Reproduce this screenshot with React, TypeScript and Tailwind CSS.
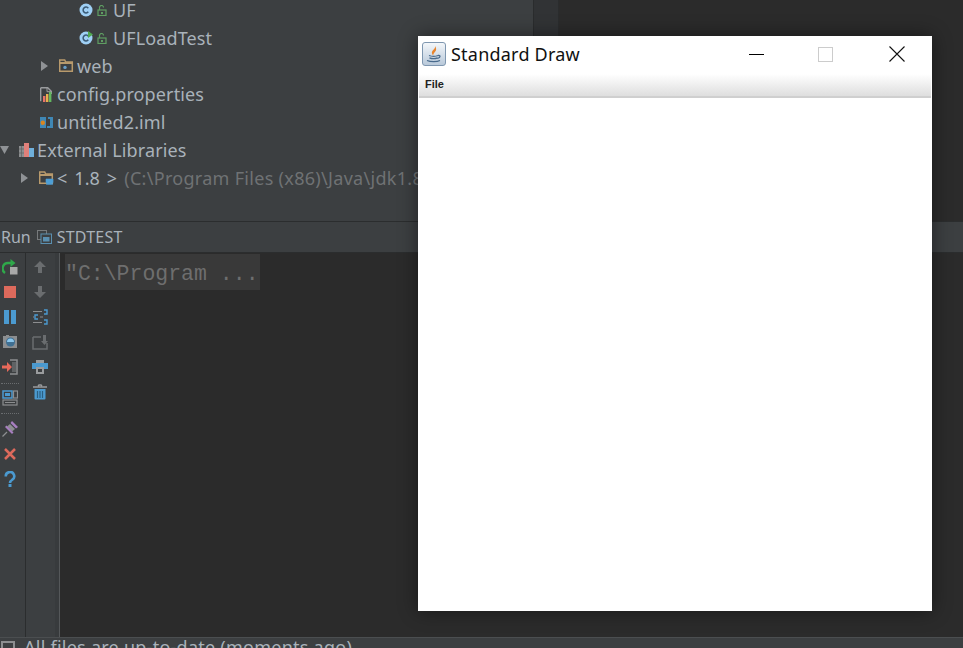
import type { ReactNode } from "react";

const uiFont = "font-['Noto_Sans',sans-serif]";

function ClassIcon({ run }: { run?: boolean }) {
  return (
    <svg width="14" height="14" viewBox="0 0 14 14" aria-hidden="true">
      <circle cx="7" cy="7" r="6.5" fill="#9fd0f5" />
      <path d="M9.3 5.2A2.9 2.9 0 1 0 9.3 8.8" fill="none" stroke="#3a5a75" strokeWidth="1.5" />
      {run && <path d="M9 0l5 3.5-5 3.5z" fill="#4fa84f" />}
    </svg>
  );
}

function LockIcon() {
  return (
    <svg width="10" height="11" viewBox="0 0 10 11" aria-hidden="true">
      <path d="M2.5 5V2.5a2 2 0 0 1 4 0" fill="none" stroke="#5f9e62" strokeWidth="1.2" />
      <rect x="1" y="5" width="8" height="5.5" fill="none" stroke="#5f9e62" strokeWidth="1.2" />
      <rect x="4" y="7" width="2" height="2" fill="#5f9e62" />
    </svg>
  );
}

function Arrow({ down }: { down?: boolean }) {
  return (
    <svg width="9" height="10" viewBox="0 0 9 10" aria-hidden="true">
      <path d={down ? "M0 1h9L4.5 9z" : "M1 0l7 5-7 5z"} fill="#8f9295" />
    </svg>
  );
}

function FolderIcon({ cup }: { cup?: boolean }) {
  return (
    <svg width="16" height="14" viewBox="0 0 16 14" aria-hidden="true">
      <path d="M.7 1h5l1 2h6.6v9.3H.7z" fill="none" stroke="#b89a6c" strokeWidth="1.5" />
      <path d="M1 3h12v2H1z" fill="#b89a6c" />
      {cup ? (
        <path d="M7 8h7v3a2 2 0 0 1-2 2H9a2 2 0 0 1-2-2zM7 13.5h7" fill="#4d9fd6" stroke="#4d9fd6" strokeWidth=".6" />
      ) : (
        <circle cx="6" cy="8.4" r="1.7" fill="#6a9fc8" />
      )}
    </svg>
  );
}

function PropertiesIcon() {
  return (
    <svg width="13" height="15" viewBox="0 0 13 15" aria-hidden="true">
      <path d="M.7.7h7l3.6 3.6V7M.7.7v13.6" fill="none" stroke="#9a9c9e" strokeWidth="1.4" />
      <path d="M7 .7v4h4" fill="none" stroke="#9a9c9e" strokeWidth="1" />
      <rect x="3" y="9" width="2.4" height="6" fill="#e8746a" />
      <rect x="6" y="7" width="2.4" height="8" fill="#e8b04f" />
      <rect x="9" y="5" width="2.4" height="10" fill="#62b85f" />
    </svg>
  );
}

function ImlIcon() {
  return (
    <svg width="13" height="13" viewBox="0 0 13 13" aria-hidden="true">
      <path d="M0 1h6v11H0z" fill="#3f87b5" />
      <path d="M8 1h5v11H7v-2h3V3H8z" fill="#3f87b5" />
      <circle cx="2.800" cy="6.800" r="2.200" fill="#d9861f" />
    </svg>
  );
}

function LibrariesIcon() {
  return (
    <svg width="15" height="14" viewBox="0 0 15 14" aria-hidden="true">
      <rect x="0" y="3" width="5" height="11" fill="#8c8e90" />
      <path d="M0 6h5M0 10h5M2.500 3v11" stroke="#5f6163" strokeWidth=".7" />
      <rect x="5" y="0" width="5" height="14" fill="#e0807a" />
      <rect x="10" y="5" width="5" height="9" fill="#6fb0dc" />
    </svg>
  );
}

function TreeRow({ indent, icon, children }: { indent: string; icon: ReactNode; children: ReactNode }) {
  return (
    <div className={`flex h-[28px] items-center whitespace-nowrap ${indent}`}>
      {icon}
      {children}
    </div>
  );
}

function ToolIcon({ children }: { children: ReactNode }) {
  return (
    <div className="flex h-[25px] w-full items-center justify-center">
      <svg width="16" height="16" viewBox="0 0 16 16" aria-hidden="true">
        {children}
      </svg>
    </div>
  );
}

function Dotted() {
  return <div className="mx-[1px] h-0 border-t border-dotted border-[#6a6d70]" />;
}

function JavaIcon() {
  return (
    <div className="flex h-[24px] w-[24px] items-center justify-center rounded-[3px] border border-[#7f97b0] bg-gradient-to-b from-[#f4f7fa] to-[#b9c9da]">
      <svg width="18" height="19" viewBox="0 0 18 19" aria-hidden="true">
        <path d="M10 1c1 3-4 4.500-3 7.500.3 1 1.200 2 1.200 2C7.800 8.500 10.500 7 11 5.200c.4-1.400-.2-3-1-4.200z" fill="#e8842c" />
        <path d="M4 10.500c2.500 1 7 1 9 0M4.500 12.800c2 .8 6 .8 8 0M13 10.500c2.500-.5 3 2-.5 2.800M2 15.500c3.500 1.500 10 1.500 13 0" fill="none" stroke="#486a8c" strokeWidth="1.300" />
      </svg>
    </div>
  );
}

export default function App() {
  return (
    <div className={`relative flex h-[648px] w-[963px] flex-col overflow-hidden bg-[#2b2b2b] ${uiFont}`}>
      {/* Project tree */}
      <div className="flex h-[221px] shrink-0">
        <div className="w-[533px] overflow-hidden bg-[#3c3f41] text-[18px] tracking-[0.12px] text-[#a9b2ba]">
          <div className="-mt-[4px]">
            <TreeRow indent="pl-[79px]" icon={<><ClassIcon /><span className="ml-[4px]"><LockIcon /></span></>}>
              <span className="ml-[6px]">UF</span>
            </TreeRow>
            <TreeRow indent="pl-[79px]" icon={<><ClassIcon run /><span className="ml-[4px]"><LockIcon /></span></>}>
              <span className="ml-[6px]">UFLoadTest</span>
            </TreeRow>
            <TreeRow indent="pl-[40px]" icon={<><Arrow /><span className="ml-[10px]"><FolderIcon /></span></>}>
              <span className="ml-[2px]">web</span>
            </TreeRow>
            <TreeRow indent="pl-[40px]" icon={<PropertiesIcon />}>
              <span className="ml-[4px]">config.properties</span>
            </TreeRow>
            <TreeRow indent="pl-[40px]" icon={<ImlIcon />}>
              <span className="ml-[4px]">untitled2.iml</span>
            </TreeRow>
            <TreeRow indent="pl-0" icon={<><Arrow down /><span className="ml-[10px]"><LibrariesIcon /></span></>}>
              <span className="ml-[3px]">External Libraries</span>
            </TreeRow>
            <TreeRow indent="pl-[20px]" icon={<><Arrow /><span className="ml-[10px]"><FolderIcon cup /></span></>}>
              <span className="ml-[2px] [word-spacing:2px]">&lt; 1.8 &gt;</span>
              <span className="ml-[7px] tracking-[0.3px] text-[#6f7274]">(C:\Program Files (x86)\Java\jdk1.8</span>
            </TreeRow>
          </div>
        </div>
        <div className="w-[26px] border-x border-[#2a2c2d] bg-[#313335]" />
        <div className="flex-1 bg-[#2b2b2b]" />
      </div>

      {/* Run tool window header */}
      <div className="flex h-[32px] shrink-0 items-center border-y border-[#2b2d2e] bg-[#3c3f41] pl-[1px] text-[16px] text-[#a9b2ba]">
        <span>Run</span>
        <svg className="ml-[6px]" width="15" height="14" viewBox="0 0 15 14" aria-hidden="true">
          <rect x=".5" y=".5" width="9" height="9" fill="none" stroke="#777a7c" />
          <rect x="4" y="4" width="10.500" height="9.500" fill="#3c3f41" stroke="#5a8fb0" />
          <rect x="6" y="7" width="6.500" height="4.500" fill="#5a8fb0" />
        </svg>
        <span className="ml-[5px] tracking-[0.2px]">STDTEST</span>
      </div>

      {/* Run tool window body */}
      <div className="flex min-h-0 flex-1">
        <div className="w-[26px] shrink-0 border-r border-[#2b2d2e] bg-[#3c3f41] pr-[5px] pt-[1px]">
          <ToolIcon>
            <path d="M3 14A5.500 5.500 0 0 1 6 4h4" fill="none" stroke="#2fa84a" strokeWidth="2.400" />
            <path d="M8.500 0l5 4-5 4z" fill="#2fa84a" />
            <rect x="8" y="8" width="7.500" height="7.500" fill="#a8a8a8" />
          </ToolIcon>
          <ToolIcon><rect x="2" y="2" width="12" height="12" fill="#dd6a5c" /></ToolIcon>
          <ToolIcon>
            <rect x="2" y="1" width="5" height="14" fill="#4b9ad0" />
            <rect x="9" y="1" width="5" height="14" fill="#4b9ad0" />
          </ToolIcon>
          <ToolIcon>
            <path d="M1 2h3V1h3v1h8v12H1z" fill="#8c8e90" />
            <circle cx="8.500" cy="8" r="4.500" fill="#3f6f92" />
            <path d="M5 8a3.500 3.500 0 0 1 7 0z" fill="#8ac6ec" />
          </ToolIcon>
          <ToolIcon>
            <path d="M8 1h7v14H8" fill="none" stroke="#8c8e90" strokeWidth="1.500" />
            <path d="M10 3h4v10h-4z" fill="#5f6264" />
            <path d="M0 6.500h5V3l5 5-5 5V9.500H0z" fill="#e8695a" />
          </ToolIcon>
          <div className="mt-[4px]"><Dotted /></div>
          <div className="mt-[1px]">
            <ToolIcon>
              <rect x="1" y="1" width="9" height="7" fill="none" stroke="#4b9ad0" strokeWidth="1.500" />
              <rect x="3" y="3" width="5" height="3" fill="#4b9ad0" />
              <rect x="11.500" y="1" width="4" height="7" fill="none" stroke="#8c8e90" strokeWidth="1.200" />
              <rect x="1" y="10" width="14" height="5" fill="none" stroke="#8c8e90" strokeWidth="1.200" />
              <path d="M3 12.500h10" stroke="#8c8e90" />
            </ToolIcon>
          </div>
          <div className="mt-[3px]"><Dotted /></div>
          <div className="mt-[2px]">
            <ToolIcon>
              <path d="M10 0l6 6-2 1.500L8.500 2z" fill="#a77fc0" />
              <path d="M8 3l5 5-3 2.500-5-5z" fill="#8c8e90" />
              <path d="M4.500 4.500l7 7-1.500 1.500-7-7z" fill="#a77fc0" />
              <path d="M5 11l-4.500 4.500" stroke="#8c8e90" strokeWidth="1.200" />
            </ToolIcon>
          </div>
          <ToolIcon><path d="M3 3l10 10M13 3L3 13" stroke="#dd6a5c" strokeWidth="2.500" /></ToolIcon>
          <ToolIcon>
            <path d="M3.800 5.500a4.200 4.200 0 1 1 6.500 3.200c-1.500 1-2.300 1.500-2.300 3.300" fill="none" stroke="#4b9ad0" strokeWidth="2.600" />
            <rect x="6.500" y="13" width="3" height="3" fill="#4b9ad0" />
          </ToolIcon>
        </div>
        <div className="w-[29px] shrink-0 bg-[#3c3f41] pr-[2px] pt-[1px]">
          <ToolIcon><path d="M8 2l6 6h-4v6H6V8H2z" fill="#6a6d6f" /></ToolIcon>
          <ToolIcon><path d="M8 14L2 8h4V2h4v6h4z" fill="#6a6d6f" /></ToolIcon>
          <ToolIcon>
            <path d="M1 2.500h9M1 8h1M8 8h3M1 13.500h9" stroke="#8c8e90" strokeWidth="1.200" />
            <path d="M12 1h3v4h-3M6 6H3v4h3M12 11h3v4h-3" fill="none" stroke="#4b9ad0" strokeWidth="1.400" />
          </ToolIcon>
          <ToolIcon>
            <path d="M1 3h8M1 3v12h14V9" fill="none" stroke="#6a6d6f" strokeWidth="1.500" />
            <path d="M11 1h3v6h2l-3.500 4L9 7h2z" fill="#6a6d6f" />
          </ToolIcon>
          <ToolIcon>
            <rect x="4" y="1" width="8" height="3" fill="#9a9c9e" />
            <path d="M0 4h16v6h-4V8H4v2H0z" fill="#4b9ad0" />
            <rect x="4" y="8" width="8" height="7" fill="#9a9c9e" />
            <rect x="6" y="10" width="4" height="3" fill="#3c3f41" />
          </ToolIcon>
          <ToolIcon>
            <path d="M1 3h14M6 2l1-1h2l1 1" stroke="#9a9c9e" strokeWidth="1.500" fill="none" />
            <path d="M2.500 5h11v9.500a1 1 0 0 1-1 1h-9a1 1 0 0 1-1-1z" fill="#4b9ad0" />
            <path d="M5.500 7v7M8 7v7M10.500 7v7" stroke="#2b5f82" strokeWidth="1.200" />
          </ToolIcon>
        </div>
        <div className="w-[5px] shrink-0 border-r border-[#55585a] bg-[#383b3d]" />
        <div className="min-w-0 flex-1 bg-[#2b2b2b] pl-[5px]">
          <div className="mt-px flex h-[36px] w-[195px] items-center whitespace-nowrap bg-[#393939] pt-[4px] font-['Liberation_Mono',monospace] text-[21.5px] text-[#6e6e6e]">
            "C:\Program ...
          </div>
        </div>
      </div>

      {/* Status bar */}
      <div className="flex h-[11px] shrink-0 items-start overflow-hidden border-t border-[#4b4e50] bg-[#3c3f41] pl-[1px] text-[18px] tracking-[0.25px] text-[#a9b2ba]">
        <div className="mt-[3px] h-[12px] w-[14px] shrink-0 border-2 border-[#8c8e90]" />
        <span className="-mt-[4px] ml-[9px] whitespace-nowrap">All files are up-to-date (moments ago)</span>
      </div>

      {/* Floating Standard Draw window */}
      <div className="absolute left-[418px] top-[36px] flex h-[575px] w-[514px] flex-col bg-white shadow-[0_0_18px_rgba(0,0,0,0.45)]">
        <div className="flex h-[38px] shrink-0 items-center pb-[2px] pl-[4px] text-[18px] tracking-[0.22px] text-[#111]">
          <JavaIcon />
          <span className="ml-[5px]">Standard Draw</span>
          <div className="ml-auto flex h-full items-center pr-[27px]">
            <div className="h-px w-[15px] bg-black" />
            <div className="ml-[54px] h-[15px] w-[15px] border border-[#cccccc]" />
            <svg className="ml-[56px]" width="16" height="16" viewBox="0 0 16 16" aria-hidden="true">
              <path d="M.5.500l15 15M15.500.500l-15 15" stroke="#111" strokeWidth="1.100" />
            </svg>
          </div>
        </div>
        <div className="mx-px flex h-[24px] shrink-0 items-center border-b-2 border-[#cfcfcf] bg-gradient-to-b from-white to-[#dedede] pb-[2px] pl-[6px] font-['Liberation_Sans',sans-serif] text-[11px] font-bold text-[#222]">
          File
        </div>
        <div className="flex-1 bg-white" />
      </div>
    </div>
  );
}
